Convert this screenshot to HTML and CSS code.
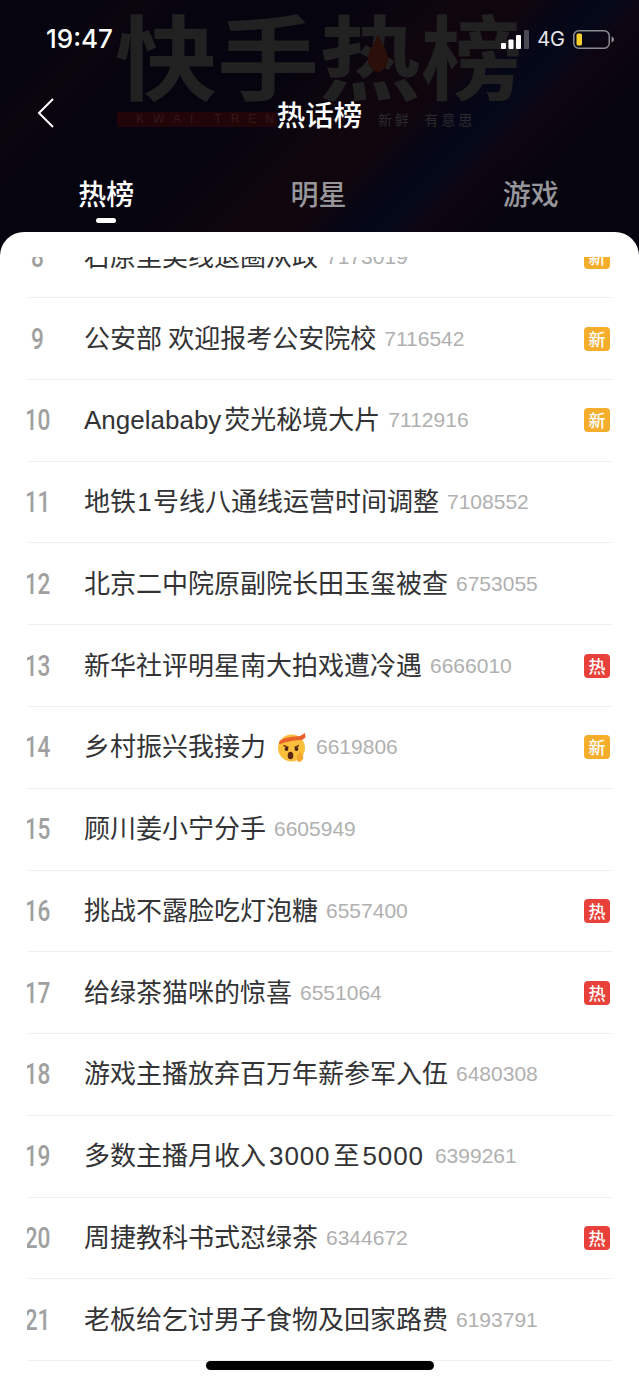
FILE: index.html
```html
<!DOCTYPE html>
<html lang="zh-CN">
<head>
    <meta charset="UTF-8">
    <meta name="viewport" content="width=device-width, initial-scale=1.0">
    <title>热话榜</title>
    <link rel="stylesheet" href="styles.css">
</head>
<body>
    <div class="phone">
        <header class="top">
            <div class="poster">
                <div class="poster_title">快手热榜</div>
                <svg class="poster_flame" viewBox="0 0 30 50"><path d="M15 0C18 12 28 20 28 33C28 43 22 50 15 50C8 50 2 43 2 33C2 20 12 12 15 0Z"/></svg>
                <div class="poster_en">KWAI TREN</div>
                <div class="poster_sub">新鲜  有意思</div>
            </div>

            <div class="status">
                <span class="time">19:47</span>
                <div class="status_right">
                    <svg class="signal" width="28" height="19" viewBox="0 0 28 19">
                        <rect x="0" y="13" width="5" height="6" rx="1" fill="#fff"/>
                        <rect x="7.5" y="9.5" width="5" height="9.5" rx="1" fill="#fff"/>
                        <rect x="15" y="5" width="5" height="14" rx="1" fill="#fff"/>
                        <rect x="23" y="0" width="5" height="19" rx="1" fill="#4a4a52"/>
                    </svg>
                    <span class="net">4G</span>
                    <svg class="battery" width="41" height="19" viewBox="0 0 41 19">
                        <rect x="0.75" y="0.75" width="35.5" height="17.5" rx="5" fill="none" stroke="#8b8b8f" stroke-width="1.5"/>
                        <rect x="3.5" y="3.5" width="5.5" height="12" rx="1.5" fill="#fad02c"/>
                        <path d="M38.5 6.5C40 7 41 8 41 9.5C41 11 40 12 38.5 12.5Z" fill="#8b8b8f"/>
                    </svg>
                </div>
            </div>

            <nav class="titlebar">
                <svg class="back" width="18" height="32" viewBox="0 0 18 32"><path d="M16 2L2 16L16 30" fill="none" stroke="#fff" stroke-width="2"/></svg>
                <h1>热话榜</h1>
            </nav>

            <ul class="tabs">
                <li class="tab active">热榜</li>
                <li class="tab">明星</li>
                <li class="tab">游戏</li>
            </ul>
        </header>

        <main class="sheet">
            <div class="scroller">
                <ul class="list">
                    <li class="row"><span class="rank">8</span><span class="name">石原里美线退圈从政</span><span class="count">7173019</span><span class="badge new">新</span></li>
                    <li class="row"><span class="rank">9</span><span class="name tight">公安部 欢迎报考公安院校</span><span class="count">7116542</span><span class="badge new">新</span></li>
                    <li class="row"><span class="rank">10</span><span class="name"><span class="word">Angelababy</span>荧光秘境大片</span><span class="count">7112916</span><span class="badge new">新</span></li>
                    <li class="row"><span class="rank">11</span><span class="name">地铁<span class="lat">1</span>号线八通线运营时间调整</span><span class="count">7108552</span></li>
                    <li class="row"><span class="rank">12</span><span class="name">北京二中院原副院长田玉玺被查</span><span class="count">6753055</span></li>
                    <li class="row"><span class="rank">13</span><span class="name">新华社评明星南大拍戏遭冷遇</span><span class="count">6666010</span><span class="badge hot">热</span></li>
                    <li class="row"><span class="rank">14</span><span class="name">乡村振兴我接力</span>
                        <svg class="emoji" width="30" height="30" viewBox="0 0 30 30">
                            <circle cx="14.5" cy="16" r="13.5" fill="#fbbf3c"/>
                            <path d="M2.5 9C8 5 17 4.5 23 4L28 1L28.5 5.5L25 8C18 8 9 9.5 2 12.5Z" fill="#e8622c"/>
                            <path d="M6.5 13.5L11.5 15.5M22 13.5L17.5 15.5" stroke="#7a3b12" stroke-width="1.6" fill="none"/>
                            <circle cx="9.5" cy="17" r="1.9" fill="#4a2410"/>
                            <circle cx="19.5" cy="17" r="1.9" fill="#4a2410"/>
                            <ellipse cx="13.5" cy="23.5" rx="2.8" ry="3.8" fill="#5b2410"/>
                            <path d="M21 30C19 27 20 22 23 20C25 22 27 24 26 27C25 29 23 30 21 30Z" fill="#f5a62e"/>
                        </svg>
                        <span class="count">6619806</span><span class="badge new">新</span></li>
                    <li class="row"><span class="rank">15</span><span class="name">顾川姜小宁分手</span><span class="count">6605949</span></li>
                    <li class="row"><span class="rank">16</span><span class="name">挑战不露脸吃灯泡糖</span><span class="count">6557400</span><span class="badge hot">热</span></li>
                    <li class="row"><span class="rank">17</span><span class="name">给绿茶猫咪的惊喜</span><span class="count">6551064</span><span class="badge hot">热</span></li>
                    <li class="row"><span class="rank">18</span><span class="name">游戏主播放弃百万年薪参军入伍</span><span class="count">6480308</span></li>
                    <li class="row"><span class="rank">19</span><span class="name">多数主播月收入<span class="lat wide">3000</span>至<span class="lat wide">5000</span></span><span class="count">6399261</span></li>
                    <li class="row"><span class="rank">20</span><span class="name">周捷教科书式怼绿茶</span><span class="count">6344672</span><span class="badge hot">热</span></li>
                    <li class="row"><span class="rank">21</span><span class="name">老板给乞讨男子食物及回家路费</span><span class="count">6193791</span></li>
                </ul>
            </div>
            <div class="home_bar"></div>
        </main>
    </div>
</body>
</html>
```

FILE: styles.css
```css
* {
    box-sizing: border-box;
}
body {
    margin: 0;
    padding: 0;
    font-family: "Noto Sans CJK SC", "Liberation Sans", sans-serif;
    background-color: #05040f;
}
ul {
    list-style-type: none;
    margin: 0;
    padding: 0;
}
.phone {
    width: 639px;
    height: 1383px;
    overflow: hidden;
    position: relative;
    display: flex;
    flex-direction: column;
}

/* header */
.top {
    height: 232px;
    flex: none;
    position: relative;
    color: #fff;
    overflow: hidden;
    background-color: #04030f;
    background-image: linear-gradient(135deg,
        #05040f 10%, #0b050e 16%, #05040f 24%,
        #05040f 40%, #0f060e 52%, #10050c 60%,
        #050717 66%, #050819 71%, #0e0510 75%, #05040f 84%);
}
.poster {
    position: absolute;
    top: 0;
    left: 0;
    width: 100%;
    height: 130px;
}
.poster_title {
    position: absolute;
    left: 115px;
    top: -10px;
    font-size: 102px;
    line-height: 140px;
    font-weight: 700;
    color: #212122;
    white-space: nowrap;
    transform: scaleY(0.9);
    transform-origin: top left;
}
.poster_flame {
    position: absolute;
    left: 364px;
    top: 34px;
    width: 28px;
    height: 38px;
    fill: #2a0f0a;
}
.poster_en {
    position: absolute;
    left: 117px;
    top: 112px;
    width: 160px;
    height: 15px;
    padding-left: 19px;
    background-color: #220508;
    color: #35191a;
    font-family: "Liberation Sans", sans-serif;
    font-size: 12px;
    line-height: 15px;
    letter-spacing: 9px;
    white-space: nowrap;
    overflow: hidden;
}
.poster_sub {
    position: absolute;
    left: 378px;
    top: 109px;
    font-size: 14px;
    line-height: 20px;
    letter-spacing: 3px;
    color: #2a2a2c;
    white-space: pre;
}
.status {
    position: relative;
    height: 79px;
    padding: 25px 25px 0 46px;
    display: flex;
    justify-content: space-between;
    align-items: flex-start;
}
.time {
    font-family: Inter, "Liberation Sans", sans-serif;
    font-size: 26px;
    line-height: 28px;
    font-weight: 500;
}
.status_right {
    display: flex;
    align-items: center;
    height: 30px;
    margin-top: -1px;
}
.net {
    margin: 0 8px 0 8px;
    font-family: Inter, "Liberation Sans", sans-serif;
    font-size: 20px;
    line-height: 22px;
    color: #e8e8ea;
}
.titlebar {
    position: relative;
    height: 70px;
    display: flex;
    align-items: center;
    justify-content: center;
}
.titlebar h1 {
    margin: 0;
    font-size: 28.5px;
    line-height: 40px;
    font-weight: 500;
}
.back {
    position: absolute;
    left: 37px;
    top: 18px;
}
.tabs {
    position: relative;
    display: grid;
    grid-template-columns: repeat(3, 1fr);
    width: 639px;
    margin-top: 19px;
    padding: 0 2px 0 0;
}
.tab {
    position: relative;
    text-align: center;
    font-size: 28px;
    line-height: 40px;
    padding-top: 5px;
    font-weight: 500;
    color: #97979b;
}
.tab.active {
    color: #fff;
}
.tab.active::after {
    content: "";
    position: absolute;
    left: 50%;
    margin-left: -10px;
    top: 50px;
    width: 20px;
    height: 5px;
    border-radius: 3px;
    background-color: #fff;
}

/* list */
.sheet {
    flex: 1;
    position: relative;
    background-color: #fff;
    border-radius: 24px 24px 0 0;
    padding: 25px 27px 0;
    overflow: hidden;
}
.scroller {
    height: 1126px;
    overflow: hidden;
}
.list {
    margin-top: -40.6px;
}
.row {
    height: 81.77px;
    display: flex;
    align-items: center;
    border-bottom: 1.5px solid #f0f0f0;
}
.rank {
    flex: none;
    width: 21px;
    margin-right: 36px;
    font-family: Roboto, "Liberation Sans", sans-serif;
    font-size: 29px;
    line-height: 34px;
    font-weight: 500;
    color: #a0a0a0;
    display: flex;
    justify-content: center;
    white-space: nowrap;
    transform: scaleX(0.78);
}
.name {
    font-family: "Liberation Sans", "Noto Sans CJK SC", sans-serif;
    font-size: 26px;
    line-height: 36px;
    color: #333336;
    white-space: nowrap;
}
.name.tight {
    word-spacing: -1px;
}
.word {
    margin-right: 3px;
}
.lat {
    margin: 0 1.25px;
}
.lat.wide {
    margin: 0 3px;
    letter-spacing: 0.9px;
}
.count {
    margin-left: 8px;
    font-family: "Liberation Sans", sans-serif;
    font-size: 21px;
    line-height: 36px;
    color: #b0b0b0;
}
.emoji {
    flex: none;
    margin: 0 1px 0 11px;
}
.badge {
    margin-left: auto;
    margin-right: 2px;
    flex: none;
    width: 26px;
    height: 24px;
    border-radius: 4px;
    color: #fff;
    font-family: "Noto Sans CJK SC", sans-serif;
    font-size: 17px;
    line-height: 24px;
    text-align: center;
    font-weight: 500;
}
.badge.new {
    background-color: #f5ad2c;
}
.badge.hot {
    background-color: #e8413a;
}
.home_bar {
    position: absolute;
    left: 206px;
    top: 1129px;
    width: 228px;
    height: 9px;
    border-radius: 5px;
    background-color: #000;
}
```
